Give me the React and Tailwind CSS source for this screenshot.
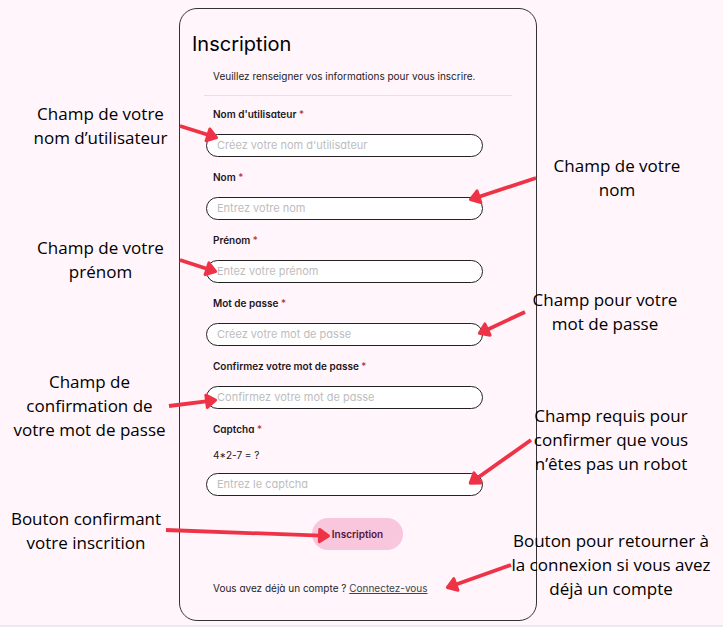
import React from "react";

const fields = [
  { id: "username", label: "Nom d'utilisateur", placeholder: "Créez votre nom d'utilisateur", type: "text" },
  { id: "lastname", label: "Nom", placeholder: "Entrez votre nom", type: "text" },
  { id: "firstname", label: "Prénom", placeholder: "Entez votre prénom", type: "text" },
  { id: "password", label: "Mot de passe", placeholder: "Créez votre mot de passe", type: "password" },
  { id: "confirm", label: "Confirmez votre mot de passe", placeholder: "Confirmez votre mot de passe", type: "password" },
  { id: "captcha", label: "Captcha", placeholder: "Entrez le captcha", type: "text", hint: "4*2-7 = ?" },
];

const arrows = [
  [180, 126, 218, 138],
  [180, 260, 217, 272],
  [169, 406, 217, 400],
  [166, 530, 330, 536],
  [536, 178, 469, 200],
  [525, 312, 478, 334],
  [531, 440, 469, 484],
  [511, 565, 446, 588],
];

function Arrow({ points }) {
  const [x1, y1, x2, y2] = points;
  const length = Math.hypot(x2 - x1, y2 - y1);
  const angle = (Math.atan2(y2 - y1, x2 - x1) * 180) / Math.PI;
  return (
    <g transform={`translate(${x2} ${y2}) rotate(${angle})`}>
      <path d={`M${-length} 0H-9`} stroke="#ee3347" strokeWidth="3.8" fill="none" />
      <path d="M-10.5-6.2 -1.5 0 -10.5 6.2Z" fill="#ee3347" stroke="#ee3347" strokeWidth="3" strokeLinejoin="round" />
    </g>
  );
}

function Field({ id, label, placeholder, type, hint }) {
  return (
    <div className="flex flex-col gap-3">
      <label htmlFor={id} className="pl-[7px] text-[10px] leading-4 font-semibold text-[#1c151b]">
        {label} <span className="font-normal text-[#b3262e]">*</span>
      </label>
      {hint && <p className="pl-[7px] text-[10px] leading-3 text-[#1c151b]">{hint}</p>}
      <input
        id={id}
        type={type}
        placeholder={placeholder}
        className="h-[23px] w-full rounded-full border border-[#222] bg-white px-2.5 pb-0.5 text-[11px] text-[#222] placeholder:text-[#bdbdbd]"
      />
    </div>
  );
}

function Note({ children, className }) {
  return <p className={`text-center text-[17px] leading-6 text-black ${className}`}>{children}</p>;
}

export default function App() {
  return (
    <div className="relative min-h-screen border-b-2 border-[#e9ebef] bg-[#fff5fb] font-['Open_Sans','Noto_Sans',sans-serif]">
      <div className="flex items-start pt-2">
        <aside className="flex w-[179px] shrink-0 flex-col pt-[94px]">
          <Note className="pl-[22px]">Champ de votre<br />nom d’utilisateur</Note>
          <Note className="mt-[86px] pl-[22px]">Champ de votre<br />prénom</Note>
          <Note className="mt-[86px]">Champ de<br />confirmation de<br />votre mot de passe</Note>
          <Note className="mt-[65px] pr-[7px]">Bouton confirmant<br />votre inscrition</Note>
        </aside>

        <main className="min-w-0 flex-1 rounded-[18px] border border-[#333] pt-[23px] pb-6 font-['Inter','Liberation_Sans',sans-serif] [font-feature-settings:'cv11']">
          <h1 className="pl-3 text-[20px] leading-6 text-black">Inscription</h1>
          <p className="mt-3 pl-[33px] text-[10px] leading-4 text-[#241c22]">
            Veuillez renseigner vos informations pour vous inscrire.
          </p>
          <hr className="mt-[11px] mr-6 ml-6 border-[#f0dbe4]" />
          <form className="mt-2.5 mr-[53px] ml-[26px]" onSubmit={(e) => e.preventDefault()}>
            <div className="flex flex-col gap-3">
              {fields.map((field) => (
                <Field key={field.id} {...field} />
              ))}
            </div>
            <div className="mt-[22px] flex justify-center pl-[26px]">
              <button type="submit" className="h-8 rounded-full bg-[#f8c6dd] px-5 text-[10px] font-semibold text-[#5a1239]">
                Inscription
              </button>
            </div>
          </form>
          <p className="mt-[30px] pl-[33px] text-[10px] leading-4 text-[#241c22]">
            Vous avez déjà un compte ?{" "}
            <a href="#connexion" className="text-[#36474a] underline">Connectez-vous</a>
          </p>
        </main>

        <aside className="relative -ml-[34px] flex w-[220px] shrink-0 flex-col pt-[146px] pr-1">
          <Note className="pl-3">Champ de votre<br />nom</Note>
          <Note className="mt-[86px] pr-3">Champ pour votre<br />mot de passe</Note>
          <Note className="mt-[68px]">Champ requis pour<br />confirmer que vous<br />n’êtes pas un robot</Note>
          <Note className="mt-[53px]">Bouton pour retourner à<br />la connexion si vous avez<br />déjà un compte</Note>
        </aside>
      </div>

      <svg className="pointer-events-none absolute top-0 left-0" width="723" height="627" viewBox="0 0 723 627" aria-hidden="true">
        {arrows.map((points) => (
          <Arrow key={points.join("-")} points={points} />
        ))}
      </svg>
    </div>
  );
}
